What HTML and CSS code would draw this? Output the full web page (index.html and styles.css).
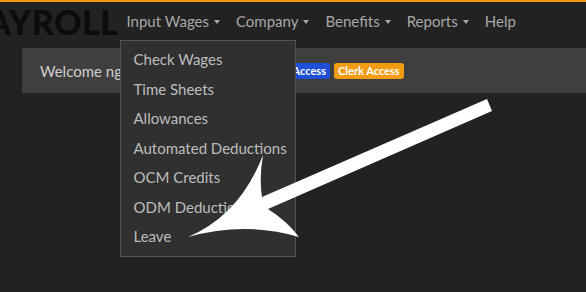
FILE: index.html
```html
<!DOCTYPE html>
<html>
<head>
<title>Payroll</title>
<link rel="stylesheet" href="styles.css">
</head>
<body>
    <nav class="navbar">
        <a class="brand" href="#">PAYROLL</a>
        <ul class="nav-menu">
            <li class="nav-item open">
                <a class="nav-link caret" href="#">Input Wages</a>
                <div class="dropdown">
                    <a class="dropdown-item" href="#">Check Wages</a>
                    <a class="dropdown-item" href="#">Time Sheets</a>
                    <a class="dropdown-item" href="#">Allowances</a>
                    <a class="dropdown-item" href="#">Automated Deductions</a>
                    <a class="dropdown-item" href="#">OCM Credits</a>
                    <a class="dropdown-item" href="#">ODM Deductions</a>
                    <a class="dropdown-item" href="#">Leave</a>
                </div>
            </li>
            <li class="nav-item"><a class="nav-link caret" href="#">Company</a></li>
            <li class="nav-item"><a class="nav-link caret" href="#">Benefits</a></li>
            <li class="nav-item"><a class="nav-link caret" href="#">Reports</a></li>
            <li class="nav-item"><a class="nav-link" href="#">Help</a></li>
        </ul>
    </nav>

    <div class="welcome">
        <span class="welcome-text">Welcome nguyen.thanh.admin</span>
        <span class="badge badge-blue">Admin Access</span>
        <span class="badge badge-orange">Clerk Access</span>
    </div>

    <svg class="arrow" width="586" height="292" viewBox="0 0 586 292">
        <path d="M 188 237 Q 240 215 263 155 Q 259 178 262 197 L 487 99 L 492 111 L 268 209 Q 287 221 299 237 Q 245 221 188 237 Z" fill="#fff"/>
    </svg>
</body>
</html>
```

FILE: styles.css
```css
body {
    margin: 0;
    background-color: #222;
    font-family: Lato, "Open Sans", sans-serif;
    overflow: hidden;
    height: 292px;
    position: relative;
}

a {
    text-decoration: none;
}

.navbar {
    display: flex;
    align-items: center;
    height: 38px;
    border-top: 2px solid #f39c12;
    background-color: #222;
}

.brand {
    margin-left: -33px;
    font-size: 34px;
    font-weight: 900;
    color: #0c0c0c;
    letter-spacing: 0.5px;
}

.nav-menu {
    display: flex;
    list-style: none;
    margin: 0;
    padding: 0;
}

.nav-item {
    position: relative;
}

.nav-link {
    display: block;
    padding: 0 8px;
    font-size: 15px;
    line-height: 38px;
    color: #a8a8a8;
}

.caret::after {
    content: "";
    display: inline-block;
    margin-left: 5px;
    vertical-align: 3px;
    border-top: 4px solid #a8a8a8;
    border-left: 3.5px solid transparent;
    border-right: 3.5px solid transparent;
}

.dropdown {
    position: absolute;
    top: 38px;
    left: 1px;
    width: 174px;
    padding: 4px 0;
    background-color: #303030;
    border: 1px solid #555;
    z-index: 5;
}

.dropdown-item {
    display: block;
    padding: 0 13px;
    font-size: 15px;
    line-height: 29.5px;
    color: #bdbdbd;
    white-space: nowrap;
}

.welcome {
    display: flex;
    align-items: center;
    gap: 4px;
    height: 45px;
    margin: 8px 0 0 22px;
    padding-left: 18px;
    background-color: #3f3f3f;
    white-space: nowrap;
}

.welcome-text {
    font-size: 15px;
    color: #d0d0d0;
    margin-right: 11px;
}

.badge {
    font-size: 11px;
    font-weight: 700;
    color: #fff;
    padding: 1px 4px;
    border-radius: 3px;
    line-height: 14px;
}

.badge-blue {
    background-color: #1f4fd6;
}

.badge-orange {
    background-color: #f39c12;
}

.arrow {
    position: absolute;
    top: 0;
    left: 0;
    z-index: 10;
}
```
